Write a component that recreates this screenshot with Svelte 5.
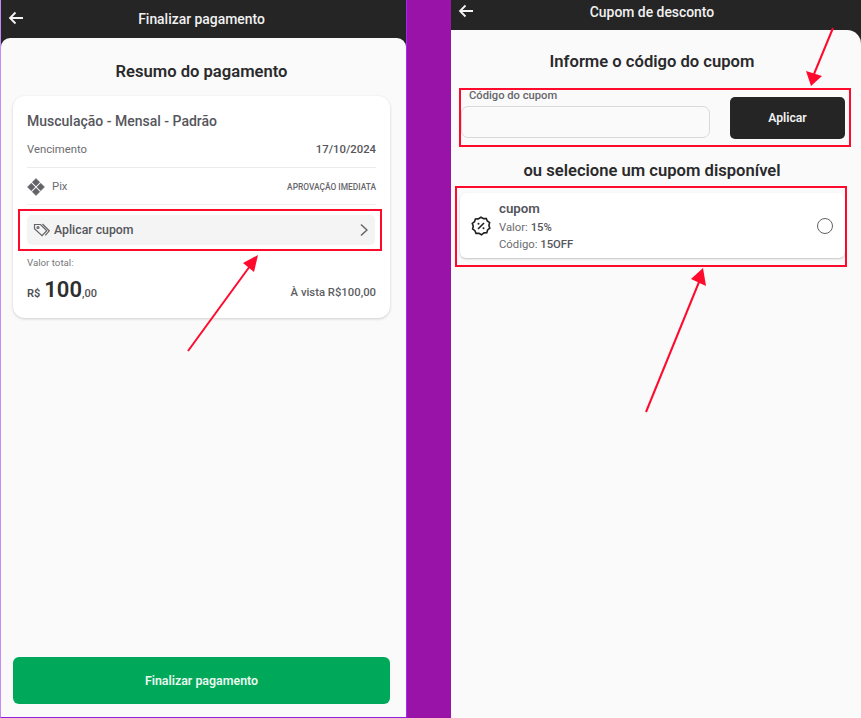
<script>
  const arrows = [
    { x1: 188, y1: 351, x2: 250, y2: 266, head: '258,255 243,263 254,272' },
    { x1: 833, y1: 28, x2: 814, y2: 74, head: '811,86 806,71 822,76' },
    { x1: 646, y1: 412, x2: 699, y2: 282, head: '703,268 691,279 706,286' }
  ];
</script>

<div class="shots">
  <section class="phone left">
    <header class="bar">
      <svg class="back" viewBox="0 0 16 14" width="16" height="14" aria-hidden="true">
        <path d="M15 7H2M7.500 1.500 2 7l5.500 5.500" />
      </svg>
      <span>Finalizar pagamento</span>
    </header>

    <main class="sheet">
      <h2>Resumo do pagamento</h2>

      <div class="card">
        <h3>Musculação - Mensal - Padrão</h3>
        <div class="row due">
          <span class="muted">Vencimento</span>
          <strong>17/10/2024</strong>
        </div>
        <div class="row pix">
          <span class="pix-name">
            <svg viewBox="0 0 18 18" width="18" height="18" aria-hidden="true">
              <path d="M9 .5 12.800 4.300 9 8.100 5.200 4.300ZM9 9.900 12.800 13.700 9 17.500 5.200 13.700ZM.5 9 4.300 5.200 8.100 9 4.300 12.800ZM9.900 9 13.700 5.200 17.500 9 13.700 12.800Z" />
            </svg>
            <span class="muted">Pix</span>
          </span>
          <span class="approval">APROVAÇÃO IMEDIATA</span>
        </div>

        <div class="mark coupon-mark">
          <button class="coupon">
            <svg viewBox="0 0 18 16" width="18" height="16" aria-hidden="true">
              <path d="M1.500 2.500h6l6.300 6.200-4.800 5-7.500-6.900ZM9.500 2l6.800 6.800-4 4.500" />
              <circle cx="5" cy="5.500" r="1" />
            </svg>
            <span>Aplicar cupom</span>
            <svg class="chev" viewBox="0 0 8 14" width="8" height="14" aria-hidden="true">
              <path d="M1 1.500 7 7l-6 5.500" />
            </svg>
          </button>
        </div>

        <div class="total-label">Valor total:</div>
        <div class="row total">
          <span class="price"><b>R$</b> <em>100</em><i>,00</i></span>
          <strong class="cash">À vista R$100,00</strong>
        </div>
      </div>

      <button class="pay">Finalizar pagamento</button>
    </main>
  </section>

  <section class="phone right">
    <header class="bar">
      <svg class="back" viewBox="0 0 16 14" width="16" height="14" aria-hidden="true">
        <path d="M15 7H2M7.500 1.500 2 7l5.500 5.500" />
      </svg>
      <span>Cupom de desconto</span>
    </header>

    <main class="sheet">
      <h2>Informe o código do cupom</h2>

      <div class="mark code-mark">
        <label class="field">
          <span>Código do cupom</span>
          <input type="text" />
        </label>
        <button class="apply">Aplicar</button>
      </div>

      <h2 class="second">ou selecione um cupom disponível</h2>

      <div class="mark list-mark">
        <div class="offer">
          <svg viewBox="0 0 20 20" width="20" height="20" aria-hidden="true">
            <path d="M10 1.200 12.500 2.600 15.300 2.500 16.300 5 18.600 6.600 17.900 9.500 18.800 12.200 16.600 14 15.800 16.800 13 16.900 10.500 18.800 8 17.300 5 17.400 3.900 14.700 1.600 13 2.300 10.200 1.300 7.500 3.500 5.700 4.400 3 7.200 2.900Z" />
            <path d="M7 13 13 7" />
            <circle class="dot" cx="7.500" cy="7.800" r="1" />
            <circle class="dot" cx="12.500" cy="12.300" r="1" />
          </svg>
          <div class="offer-text">
            <div class="offer-name">cupom</div>
            <div class="muted">Valor: <strong>15%</strong></div>
            <div class="muted">Código: <strong>15OFF</strong></div>
          </div>
          <span class="radio"></span>
        </div>
      </div>
    </main>
  </section>

  <svg class="arrows" viewBox="0 0 861 718" width="861" height="718" aria-hidden="true">
    {#each arrows as a}
      <line x1={a.x1} y1={a.y1} x2={a.x2} y2={a.y2} />
      <polygon points={a.head} />
    {/each}
  </svg>
</div>

<style>
  :global(body) {
    margin: 0;
  }

  .shots {
    position: relative;
    display: flex;
    width: 861px;
    height: 718px;
    overflow: hidden;
    background: #9a13a8;
    font-family: Roboto, "Liberation Sans", sans-serif;
    color: #2b2b2e;
  }

  .phone {
    display: flex;
    flex-direction: column;
    background: #252525;
  }

  .left {
    width: 405px;
    height: 717px;
    border-left: 1px solid #c48af5;
    border-right: 1px solid #a728f0;
    border-bottom: 1px solid #8f20e0;
  }

  .right {
    width: 410px;
    height: 718px;
    margin-left: 44px;
  }

  .bar {
    position: relative;
    display: flex;
    align-items: center;
    justify-content: center;
    flex: none;
    color: #f1f1f1;
    font-size: 13.900px;
    font-weight: 500;
  }

  .left .bar {
    height: 38px;
    padding-right: 4px;
  }

  .right .bar {
    height: 30px;
    padding-right: 8px;
  }

  .right .bar span {
    padding-bottom: 6px;
  }

  .back {
    position: absolute;
    fill: none;
    stroke: #f4f4f4;
    stroke-width: 1.800;
  }

  .left .back {
    left: 7px;
    top: 11px;
  }

  .right .back {
    left: 7px;
    top: 4px;
  }

  .sheet {
    flex: 1;
    display: flex;
    flex-direction: column;
    background: #fafafa;
    border-radius: 9px 9px 0 0;
  }

  .right .sheet {
    border-radius: 0 14px 0 0;
  }

  h2 {
    margin: 0;
    font-size: 16.600px;
    line-height: 20px;
    font-weight: 600;
    text-align: center;
    color: #2a2a2c;
  }

  .left h2 {
    margin-top: 24px;
    padding-right: 4px;
  }

  .right h2 {
    margin-top: 22px;
    padding-right: 8px;
  }

  .right h2.second {
    margin-top: 14px;
  }

  .card {
    margin: 14px 16px 0 12px;
    padding: 15px 14px 0;
    height: 222px;
    box-sizing: border-box;
    background: #fff;
    border-radius: 12px;
    box-shadow: 0 1px 3px rgba(0, 0, 0, 0.18);
  }

  h3 {
    margin: 0;
    font-size: 14px;
    line-height: 20px;
    font-weight: 500;
    color: #56565c;
  }

  .row {
    display: flex;
    align-items: center;
    justify-content: space-between;
  }

  .muted {
    font-size: 11.300px;
    color: #6c6c70;
  }

  .due {
    height: 36px;
    border-bottom: 1px solid #ececec;
  }

  .due strong {
    font-size: 11.300px;
    font-weight: 500;
    color: #55555a;
  }

  .pix {
    height: 35px;
    padding-top: 1px;
    border-bottom: 1px solid #efefef;
  }

  .pix-name {
    display: flex;
    align-items: center;
    gap: 7px;
  }

  .pix-name svg {
    fill: #636368;
    stroke: #636368;
    stroke-width: 0.500;
    stroke-linejoin: round;
  }

  .approval {
    font-size: 8.400px;
    font-weight: 500;
    color: #66666b;
  }

  .mark {
    border: 2px solid #ff0a2d;
    box-sizing: border-box;
  }

  .coupon-mark {
    margin: 4px -6px 0 -9px;
    height: 42px;
    padding: 4px 5px 4px 7px;
  }

  .coupon {
    display: flex;
    align-items: center;
    width: 100%;
    height: 30px;
    padding: 0 7px 0 6px;
    border: 0;
    border-radius: 5px;
    background: #f4f4f4;
    font: inherit;
    font-size: 12.300px;
    font-weight: 500;
    color: #56565c;
  }

  .coupon svg {
    flex: none;
    fill: none;
    stroke: #636368;
    stroke-width: 1.200;
  }

  .coupon span {
    margin-left: 3px;
  }

  .chev {
    margin-left: auto;
  }

  .coupon .chev {
    stroke-width: 1.500;
  }

  .total-label {
    margin-top: 6px;
    font-size: 9.700px;
    line-height: 12px;
    color: #77777b;
  }

  .total {
    margin-top: 6px;
    height: 28px;
  }

  .price b {
    font-size: 11px;
    font-weight: 600;
    color: #4f4f54;
  }

  .price em {
    font-style: normal;
    font-size: 22px;
    font-weight: 600;
    color: #2e2e30;
  }

  .price i {
    font-style: normal;
    font-size: 11px;
    font-weight: 500;
    color: #4f4f54;
  }

  .cash {
    padding-top: 6px;
    font-size: 11.300px;
    font-weight: 500;
    color: #5d5d62;
  }

  .pay {
    height: 47px;
    margin: auto 16px 13px 12px;
    border: 0;
    border-radius: 6px;
    background: #00a859;
    color: #e9f8f0;
    font: inherit;
    font-size: 12.400px;
    font-weight: 600;
  }

  .code-mark {
    display: flex;
    align-items: flex-start;
    justify-content: space-between;
    height: 59px;
    margin: 16px 10px 0 8px;
    padding: 0 4px 0 0;
  }

  .field {
    display: flex;
    flex-direction: column;
  }

  .field span {
    margin-left: 8px;
    font-size: 11.200px;
    line-height: 12px;
    color: #66666b;
    font-weight: 500;
  }

  .field input {
    width: 249px;
    height: 32px;
    margin: 4px 0 0;
    box-sizing: border-box;
    border: 1px solid #d9d9d9;
    border-radius: 7px;
    background: #fafafa;
  }

  .apply {
    width: 115px;
    height: 42px;
    margin-top: 7px;
    border: 0;
    border-radius: 5px;
    background: #252525;
    color: #f1f1f1;
    font: inherit;
    font-size: 12.200px;
    font-weight: 600;
  }

  .list-mark {
    width: 392px;
    height: 81px;
    margin: 5px 0 0 4px;
    padding: 5px 0 0 3px;
  }

  .offer {
    display: flex;
    align-items: center;
    width: 385px;
    height: 65px;
    box-sizing: border-box;
    padding: 0 12px 0 11px;
    background: #fff;
    border-radius: 6px;
    box-shadow: 0 1px 2px rgba(0, 0, 0, 0.22);
  }

  .offer svg {
    flex: none;
    fill: none;
    stroke: #1f1f1f;
    stroke-width: 1.600;
  }

  .offer .dot {
    fill: #1f1f1f;
    stroke: none;
  }

  .offer-text {
    margin-left: 8px;
    padding-top: 2px;
    line-height: 17px;
  }

  .offer-name {
    margin-bottom: 2px;
    font-size: 13.300px;
    font-weight: 600;
    color: #55555b;
  }

  .offer-text strong {
    font-weight: 500;
    color: #56565b;
  }

  .radio {
    width: 16px;
    height: 16px;
    margin-left: auto;
    box-sizing: border-box;
    border: 1.500px solid #626266;
    border-radius: 50%;
  }

  .arrows {
    position: absolute;
    inset: 0;
    pointer-events: none;
  }

  .arrows line {
    stroke: #ff0a2d;
    stroke-width: 2;
  }

  .arrows polygon {
    fill: #ff0a2d;
  }
</style>
